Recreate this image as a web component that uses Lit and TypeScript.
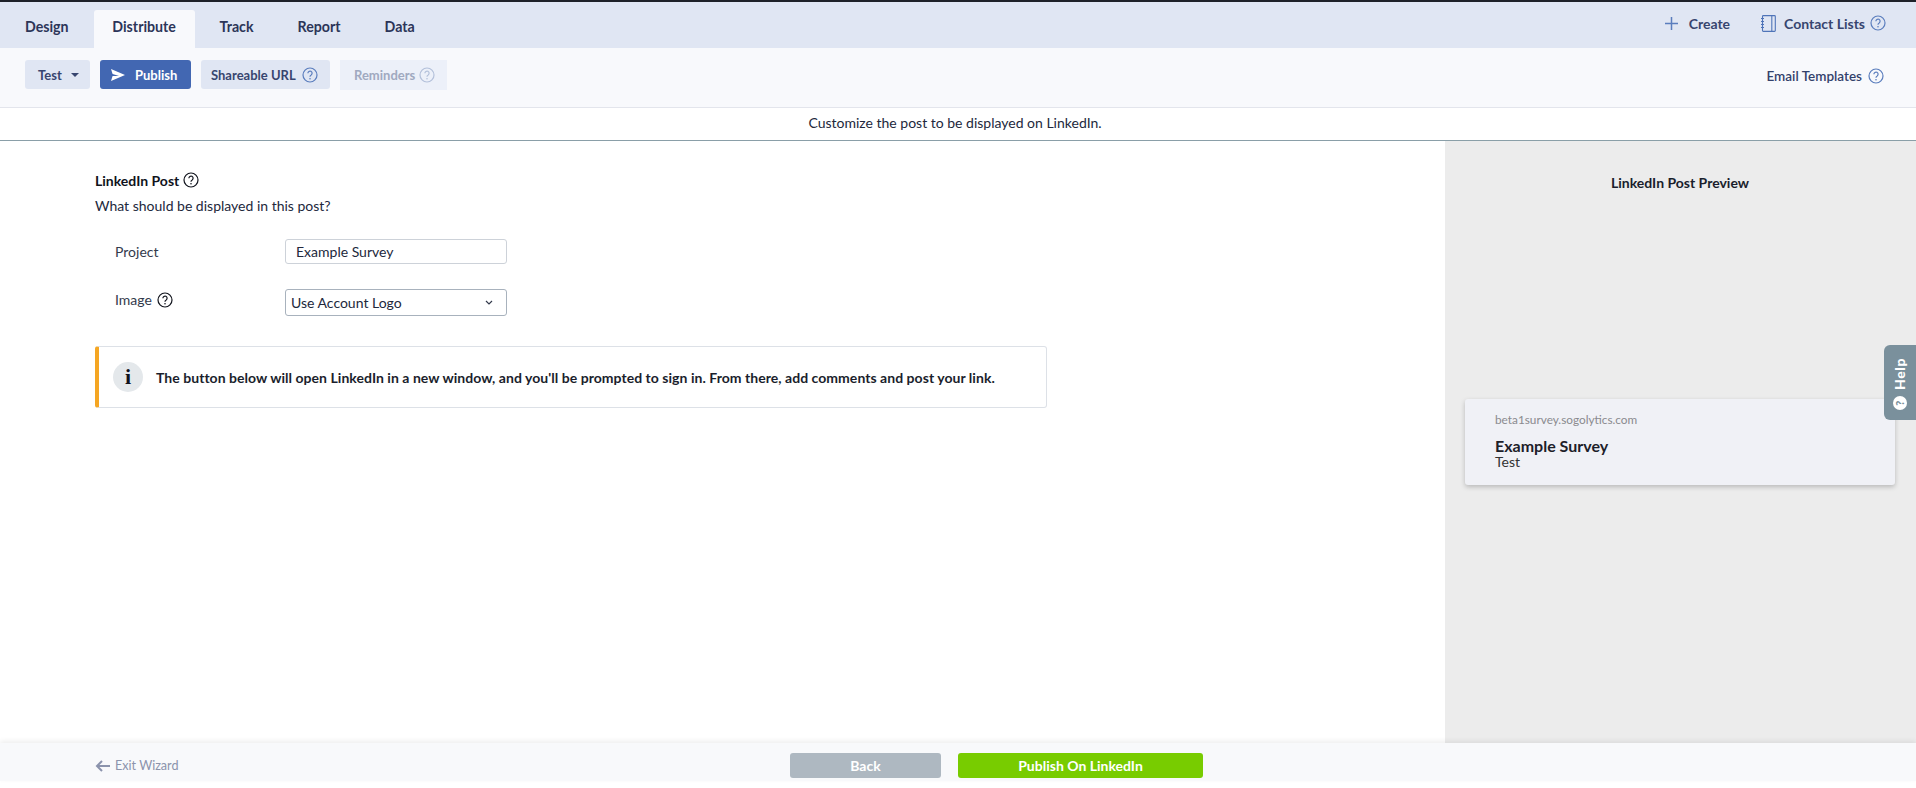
import { LitElement, html, css, svg } from 'lit'
import { customElement } from 'lit/decorators.js'

const help = (cls = '') => html`<svg class="q ${cls}" viewBox="0 0 16 16" fill="none" stroke="currentColor">
	<circle cx="8" cy="8" r="7" stroke-width="1.2" />
	<path d="M5.9 6.2a2.1 2.1 0 1 1 3.3 1.7c-.8.5-1.2.9-1.2 1.8" stroke-width="1.2" />
	<circle cx="8" cy="11.7" r=".8" fill="currentColor" stroke="none" />
</svg>`

const tabs = ['Design', 'Distribute', 'Track', 'Report', 'Data']

@customElement('app-root')
export class AppRoot extends LitElement {
	static styles = css`
		:host {
			display: flex;
			flex-direction: column;
			height: 788px;
			overflow: hidden;
			position: relative;
			background: #fff;
			color: #22283c;
			font: 14px Lato, 'Liberation Sans', sans-serif;
		}

		.q {
			width: 16px;
			height: 16px;
			flex: none;
		}

		.tabbar {
			flex: none;
			height: 48px;
			box-sizing: border-box;
			border-top: 2px solid #1e2129;
			background: #e0e6f3;
			display: flex;
			align-items: flex-end;
			padding: 0 25px;
		}
		.tab {
			height: 38px;
			box-sizing: border-box;
			padding-top: 8px;
			margin-right: 44px;
			color: #2c3558;
			font-weight: 700;
			font-size: 14.2px;
		}
		.tab.active {
			background: #f8f9fc;
			border-radius: 3px 3px 0 0;
			margin: 0 25px 0 -19px;
			padding: 8px 0 0;
			width: 101px;
			text-align: center;
		}
		.top-links {
			margin-left: auto;
			align-self: flex-start;
			height: 42px;
			display: flex;
			align-items: center;
			color: #37456f;
			font-weight: 700;
			padding-right: 5px;
		}
		.top-links .create {
			display: flex;
			align-items: center;
			gap: 11px;
			margin-right: 31px;
		}
		.top-links .lists {
			display: flex;
			align-items: center;
			gap: 8px;
		}
		.top-links .lists .q {
			margin-left: -3px;
			color: #5a7dbd;
		}

		.toolbar {
			flex: none;
			height: 60px;
			box-sizing: border-box;
			border-bottom: 1px solid #e3e5ec;
			background: #f8f9fc;
			display: flex;
			align-items: flex-start;
			gap: 10px;
			padding: 12px 32px 0 25px;
		}
		.btn {
			height: 29px;
			box-sizing: border-box;
			display: flex;
			align-items: center;
			border-radius: 3px;
			background: #e0e6f3;
			color: #37456f;
			font-weight: 700;
			font-size: 13px;
		}
		.btn .q {
			color: #5a7dbd;
		}
		.btn.test {
			width: 65px;
			padding-left: 13px;
			gap: 9px;
		}
		.caret {
			width: 0;
			height: 0;
			border: 4px solid transparent;
			border-top: 4px solid #37456f;
			border-bottom: 0;
		}
		.btn.publish {
			width: 91px;
			padding-left: 11px;
			gap: 10px;
			background: #4267b2;
			color: #fff;
		}
		.btn.share {
			width: 129px;
			padding-left: 10px;
			gap: 6px;
		}
		.btn.reminders {
			width: 107px;
			height: 30px;
			padding-left: 14px;
			gap: 4px;
			background: #ecf0f9;
			color: #a0a9c0;
			border-radius: 0;
		}
		.btn.reminders .q {
			color: #b3c0da;
		}
		.templates {
			margin-left: auto;
			margin-top: 8px;
			display: flex;
			align-items: center;
			gap: 6px;
			font-size: 13.5px;
			font-weight: 600;
			color: #33416b;
		}
		.templates .q {
			color: #5a7dbd;
		}

		.message {
			flex: none;
			height: 33px;
			box-sizing: border-box;
			border-bottom: 1px solid #8a9fa8;
			display: flex;
			align-items: center;
			justify-content: center;
			padding: 0 6px 4px 0;
			font-size: 14px;
		}

		.main {
			flex: 1;
			display: flex;
			min-height: 0;
		}
		.form {
			flex: 1;
			padding: 30px 0 0 95px;
		}
		.heading {
			display: flex;
			align-items: center;
			gap: 4px;
			height: 18px;
			font-weight: 700;
			color: #10131c;
			font-size: 14px;
		}
		.sub {
			margin-top: 8px;
			line-height: 18px;
		}
		.row {
			display: flex;
			align-items: center;
			padding-left: 20px;
		}
		.row.project {
			margin-top: 24px;
		}
		.row.image {
			margin-top: 25px;
		}
		.label {
			width: 170px;
			display: flex;
			align-items: center;
			gap: 5px;
			color: #333a4c;
		}
		.label .q {
			color: #10131c;
		}
		.image .label {
			margin-top: -6px;
		}
		.field {
			width: 222px;
			box-sizing: border-box;
			border-radius: 3px;
			display: flex;
			align-items: center;
		}
		.field.text {
			height: 25px;
			border: 1px solid #cdd2d9;
			padding-left: 10px;
		}
		.field.select {
			height: 27px;
			border: 1px solid #a8b2bd;
			padding: 0 13px 0 5px;
			justify-content: space-between;
		}
		.info {
			margin-top: 30px;
			width: 952px;
			height: 62px;
			box-sizing: border-box;
			display: flex;
			align-items: center;
			gap: 13px;
			border: 1px solid #dde1e7;
			border-left: 4px solid #f5a623;
			border-radius: 3px;
			padding-left: 14px;
			font-weight: 700;
			color: #1a1e2c;
			font-size: 14px;
			letter-spacing: 0.04px;
		}
		.info-icon {
			width: 30px;
			height: 30px;
			flex: none;
			border-radius: 50%;
			background: #e4e8eb;
			display: flex;
			align-items: center;
			justify-content: center;
			font: 700 22px 'Liberation Serif', serif;
			color: #10131c;
		}

		.preview {
			flex: none;
			width: 471px;
			background: #ececec;
			box-sizing: border-box;
			padding: 34px 21px 0 20px;
		}
		.preview-title {
			text-align: center;
			font-weight: 700;
			font-size: 14px;
			color: #1a1e2c;
			line-height: 16px;
			padding-bottom: 208px;
		}
		.card {
			height: 86px;
			box-sizing: border-box;
			background: #f0f1f6;
			border-radius: 3px;
			box-shadow: 0 2px 5px rgba(0, 0, 0, 0.22);
			padding: 13px 30px 0;
		}
		.domain {
			color: #8a8a8e;
			font-size: 11.8px;
			line-height: 16px;
		}
		.card-title {
			margin-top: 9px;
			font-size: 16px;
			font-weight: 700;
			color: #1d2029;
			line-height: 17px;
		}
		.card-sub {
			line-height: 15px;
			color: #333;
		}

		.help-tab {
			position: absolute;
			right: 0;
			top: 345px;
			width: 32px;
			height: 75px;
			box-sizing: border-box;
			background: #7a909c;
			border-radius: 6px 0 0 6px;
			color: #fff;
			font-weight: 900;
			font-size: 14px;
			letter-spacing: 0.6px;
			display: flex;
			flex-direction: column;
			align-items: center;
			justify-content: flex-end;
			padding-bottom: 10px;
			gap: 6px;
		}
		.help-label {
			writing-mode: vertical-rl;
			transform: rotate(180deg);
			line-height: 14px;
		}
		.help-dot {
			width: 14px;
			height: 14px;
			border-radius: 50%;
			background: #fff;
			color: #7a909c;
			font-size: 11px;
			line-height: 14px;
			text-align: center;
			transform: rotate(-90deg);
		}

		.footer {
			flex: none;
			height: 38px;
			box-sizing: border-box;
			margin-bottom: 7px;
			background: #f8f9fb;
			box-shadow: 0 -2px 5px rgba(0, 0, 0, 0.07);
			position: relative;
			display: flex;
			align-items: flex-start;
			padding: 10px 0 0 95px;
		}
		.exit {
			width: 695px;
			height: 25px;
			display: flex;
			align-items: center;
			gap: 5px;
			color: #8b93ac;
			font-size: 12.6px;
		}
		.action {
			height: 25px;
			border-radius: 3px;
			color: #fff;
			font-weight: 700;
			font-size: 14px;
			display: flex;
			align-items: center;
			justify-content: center;
		}
		.action.back {
			width: 151px;
			background: #aeb8c1;
			margin-right: 17px;
		}
		.action.go {
			width: 245px;
			background: #78cc00;
		}
	`

	render() {
		return html`
			<div class="tabbar">
				${tabs.map(t => html`<div class="tab ${t === 'Distribute' ? 'active' : ''}">${t}</div>`)}
				<div class="top-links">
					<span class="create">
						<svg width="13" height="13" viewBox="0 0 13 13" stroke="#5a7dbd" stroke-width="1.5"><path d="M6.5 0v13M0 6.5h13" /></svg>
						Create
					</span>
					<span class="lists">
						<svg width="15" height="17" viewBox="0 0 15 17" fill="none" stroke="#4f74b8" stroke-width="1.1">
							<rect x="1.5" y=".6" width="12.8" height="15.8" rx=".8" />
							<path d="M10.8 .6v15.8" />
							${svg`<path d="M0 3.5h3M0 6.5h3M0 9.5h3M0 12.5h3" />`}
						</svg>
						Contact Lists ${help()}
					</span>
				</div>
			</div>

			<div class="toolbar">
				<div class="btn test">Test <span class="caret"></span></div>
				<div class="btn publish">
					<svg width="14" height="12" viewBox="0 0 14 12" fill="#fff"><path d="M0 0l14 6L0 12l1.6-5H8L1.6 5z" /></svg>
					Publish
				</div>
				<div class="btn share">Shareable URL ${help()}</div>
				<div class="btn reminders">Reminders ${help()}</div>
				<div class="templates">Email Templates ${help()}</div>
			</div>

			<div class="message">Customize the post to be displayed on LinkedIn.</div>

			<div class="main">
				<div class="form">
					<div class="heading">LinkedIn Post ${help()}</div>
					<div class="sub">What should be displayed in this post?</div>
					<div class="row project">
						<div class="label">Project</div>
						<div class="field text">Example Survey</div>
					</div>
					<div class="row image">
						<div class="label">Image ${help()}</div>
						<div class="field select">
							Use Account Logo
							<svg width="8" height="5" viewBox="0 0 8 5" fill="none" stroke="#333a4c" stroke-width="1.2"><path d="M1 1l3 3 3-3" /></svg>
						</div>
					</div>
					<div class="info">
						<span class="info-icon">i</span>
						The button below will open LinkedIn in a new window, and you'll be prompted to sign in. From there, add comments and post your link.
					</div>
				</div>
				<div class="preview">
					<div class="preview-title">LinkedIn Post Preview</div>
					<div class="card">
						<div class="domain">beta1survey.sogolytics.com</div>
						<div class="card-title">Example Survey</div>
						<div class="card-sub">Test</div>
					</div>
				</div>
			</div>

			<div class="footer">
				<div class="exit">
					<svg width="15" height="12" viewBox="0 0 15 12" fill="none" stroke="#8b93ac" stroke-width="2"><path d="M15 6H2M7 1L2 6l5 5" /></svg>
					Exit Wizard
				</div>
				<div class="action back">Back</div>
				<div class="action go">Publish On LinkedIn</div>
			</div>

			<div class="help-tab"><span class="help-label">Help</span><span class="help-dot">?</span></div>
		`
	}
}
